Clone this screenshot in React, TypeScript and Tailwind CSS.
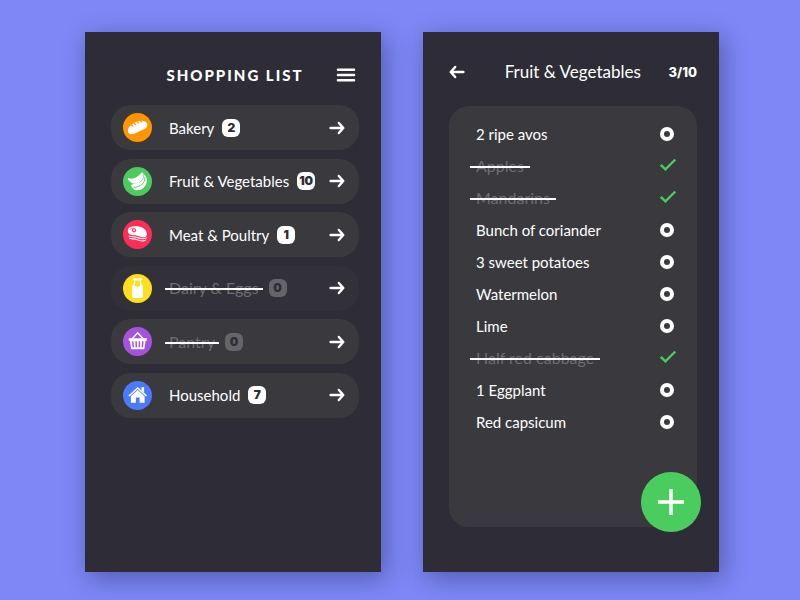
import { useState, type ReactNode } from "react";

type Category = {
  name: string;
  count: number;
  color: string;
  row?: string;
  icon: ReactNode;
};

const breadIcon = (
  <g transform="rotate(-25 14.5 14.5)">
    <path
      fill="#fff"
      d="M8 10.2c2-1 4.200-1.200 6.500-1.200s4.600.2 6.500 1.200c2.400 1.200 3.900 2.800 3.900 4.600 0 2.500-2.300 4-5.400 4h-10c-3.100 0-5.400-1.500-5.400-4 0-1.800 1.500-3.400 3.900-4.600z"
    />
    <path
      stroke="#ff9500"
      strokeWidth="1.1"
      strokeLinecap="round"
      d="M9.500 8.500l1.300 2.800M12.800 8l1.300 3M16.100 8l1.300 3M19.400 8.500l1.300 2.800"
    />
  </g>
);

const bananaIcon = (
  <g fill="#fff">
    <path d="M18.400 5.600l1.900.3c.5 3.200-.5 6.400-2.700 8.600-3.700 3.700-10.200 2.900-12.900-2.400l.7-1c2.500 1.200 5.600.8 8.200-1 2-1.300 3.800-2.500 4.800-4.500z" />
    <path d="M20.900 7.300c2.400 1.700 3.400 4.600 2.900 7.500-1 5.700-6.400 9.500-12.600 8.300l-.6-1.300c-1.400-.8-2.300-2-2.600-3.600 1-.9 1.700-1.100 2.700-1.300 3.500.1 6.300-1.100 8.300-3.300 1.500-1.700 2.100-3.800 1.900-6.300z" />
    <path fill="none" stroke="#4acd5e" strokeWidth=".9" d="M22 10c.2 5.500-4 10-11.500 10.500" />
  </g>
);

const meatIcon = (
  <g>
    <path
      fill="#fff"
      d="M6.400 7.600c3-2 9.200-1.700 12.400-.3 2.900 1.300 4.900 3.700 5.100 6.400.2 2.500-1.500 3.800-4 3.600-3-.2-4.700-1.700-7.500-2-2.500-.3-5.200-.1-6.700-1.900-1.300-1.700-1.200-4.300.7-5.800z"
    />
    <path
      fill="none"
      stroke="#fff"
      strokeWidth="1.100"
      strokeLinecap="round"
      d="M6 16.100c2.300 1 4.900.3 7.300 1.200 3.400 1.300 7 2.500 10 .6M6.600 18.300c2.300.9 4.500.3 6.800 1.200 3.200 1.300 6.500 2.400 9.200.6"
    />
    <circle cx="11" cy="10.300" r="1.600" fill="none" stroke="#ff2d55" strokeWidth="1.100" />
    <path fill="none" stroke="#ff2d55" strokeWidth=".6" d="M6.900 9.800c.3-1.200 2-1.800 4-1.700" />
  </g>
);

const bottleIcon = (
  <g>
    <path
      fill="#fff"
      d="M10.200 4.300h8.600v2h-.9v2.200c0 1.300 2 2.300 2 4.300v10c0 .7-.5 1.200-1.200 1.200h-8.400c-.7 0-1.200-.5-1.200-1.200v-10c0-2 2-3 2-4.300V6.300h-.9z"
    />
    <path fill="#fddf1e" d="M12.200 6.600h4.600v2.600c.2 1.100.9 1.800 1.400 2.600-1.500-.4-2.400.4-3.700 1-1.300-.4-2-1.300-3.600-1 .6-.8 1.200-1.500 1.300-2.600z" />
  </g>
);

const basketIcon = (
  <g>
    <path fill="none" stroke="#fff" strokeWidth="1.400" d="M8.800 12.300L14.700 5.900l5.900 6.400" />
    <path fill="#fff" d="M5.800 11.300h18v2.400h-1.200l-1.300 8.500H8.200l-1.300-8.500H5.800z" />
    <path stroke="#a552e0" strokeWidth="1.500" d="M9.700 14.200l.6 6M13.100 14.200l.2 6M16.500 14.200l-.2 6M19.900 14.200l-.6 6" />
  </g>
);

const houseIcon = (
  <g>
    <path fill="none" stroke="#fff" strokeWidth="1.500" d="M5.900 15L14.700 7l8.800 8" />
    <path fill="#fff" d="M14.700 9.100l6.900 6.200v6.500h-5v-5.200h-3.700v5.200H7.900v-6.500zM18.500 6.300h2.600v5.200l-2.600-2.300z" />
  </g>
);

const categories: Category[] = [
  { name: "Bakery", count: 2, color: "#ff9500", icon: breadIcon },
  { name: "Fruit & Vegetables", count: 10, color: "#4acd5e", icon: bananaIcon },
  { name: "Meat & Poultry", count: 1, color: "#ff2d55", icon: meatIcon },
  { name: "Dairy & Eggs", count: 0, color: "#fddf1e", row: "bg-[#32313a]", icon: bottleIcon },
  { name: "Pantry", count: 0, color: "#a552e0", icon: basketIcon },
  { name: "Household", count: 7, color: "#4b7bfa", icon: houseIcon },
];

const initialItems = [
  { name: "2 ripe avos", done: false },
  { name: "Apples", done: true },
  { name: "Mandarins", done: true },
  { name: "Bunch of coriander", done: false },
  { name: "3 sweet potatoes", done: false },
  { name: "Watermelon", done: false },
  { name: "Lime", done: false },
  { name: "Half red cabbage", done: true },
  { name: "1 Eggplant", done: false },
  { name: "Red capsicum", done: false },
];

function Arrow({ back = false }: { back?: boolean }) {
  return (
    <svg
      aria-hidden="true"
      className={back ? "h-4 w-4 rotate-180" : "h-4 w-4"}
      viewBox="0 0 16 16"
      fill="none"
      stroke="#fff"
      strokeWidth="2.400"
      strokeLinecap="round"
      strokeLinejoin="round"
    >
      <path d="M1.600 8h12.500M9.800 3l4.500 5-4.500 5" />
    </svg>
  );
}

function CategoryRow({ category }: { category: Category }) {
  const empty = category.count === 0;
  return (
    <li>
      <a
        href="#"
        className={`flex h-[45px] items-center rounded-[20px] pr-3.5 pl-3 ${category.row ?? "bg-[#3a393e]"}`}
      >
        <svg aria-hidden="true" className="mr-[17px] h-[29px] w-[29px] shrink-0" viewBox="0 0 29 29">
          <circle cx="14.500" cy="14.500" r="14.500" fill={category.color} />
          {category.icon}
        </svg>
        <span
          className={
            empty
              ? "relative mr-2.5 text-base leading-5 whitespace-nowrap text-[#6f6e72] after:absolute after:top-1/2 after:-right-1 after:-left-1 after:h-0.5 after:bg-white"
              : "mr-2 whitespace-nowrap"
          }
        >
          {category.name}
        </span>
        <span
          className={`flex h-[18px] w-[18px] shrink-0 items-center justify-center rounded-md font-['Inter',sans-serif] text-xs font-black text-[#2e2d37] ${empty ? "bg-[#656468]" : "bg-white"}`}
        >
          {category.count}
        </span>
        <span className="ml-auto">
          <Arrow />
        </span>
      </a>
    </li>
  );
}

export default function App() {
  const [items, setItems] = useState(initialItems);
  const toggle = (name: string) =>
    setItems(items.map((item) => (item.name === name ? { ...item, done: !item.done } : item)));

  return (
    <main className="grid min-h-screen grid-cols-2 gap-[42px] bg-[#7d88f6] pt-8 pr-[81px] pb-7 pl-[85px] font-['Lato',sans-serif] text-[15px] leading-5 text-white">
      <section className="bg-[#2e2d37] pr-[22px] pl-[26px] shadow-[4px_6px_24px_rgba(30,30,90,0.45)]">
        <header className="grid grid-cols-[1fr_auto_1fr] items-center pt-[33px] pb-5">
          <h1 className="col-start-2 font-black tracking-[2px] whitespace-nowrap">SHOPPING LIST</h1>
          <button type="button" aria-label="Menu" className="mr-[3px] justify-self-end">
            <svg aria-hidden="true" className="h-5 w-5" viewBox="0 0 20 20" stroke="#fff" strokeWidth="2.600" strokeLinecap="round">
              <path d="M2 4.700h16M2 10h16M2 15.300h16" />
            </svg>
          </button>
        </header>
        <ul className="flex h-[313px] flex-col justify-between">
          {categories.map((category) => (
            <CategoryRow key={category.name} category={category} />
          ))}
        </ul>
      </section>

      <section className="flex flex-col bg-[#2e2d37] pr-[22px] pb-[45px] pl-[26px] shadow-[4px_6px_24px_rgba(30,30,90,0.45)]">
        <header className="flex items-center justify-between pt-[30px] pb-6">
          <a href="#" aria-label="Back">
            <Arrow back />
          </a>
          <h2 className="ml-3 text-[17px] leading-5 whitespace-nowrap">Fruit &amp; Vegetables</h2>
          <span className="font-['Inter',sans-serif] text-[13px] font-extrabold">
            {items.filter((item) => item.done).length}/{items.length}
          </span>
        </header>
        <div className="relative grow rounded-[20px] bg-[#3a393e] pt-3 pr-[21px] pl-[27px]">
          <ul>
            {items.map((item) => (
              <li key={item.name}>
                <label className="flex h-8 cursor-pointer items-center justify-between">
                  <span
                    className={
                      item.done
                        ? "relative text-base leading-5 text-[#6f6e72] after:absolute after:top-1/2 after:-right-1.5 after:-left-1.5 after:h-0.5 after:bg-white"
                        : ""
                    }
                  >
                    {item.name}
                  </span>
                  <span className="grid h-4 w-4 place-items-center">
                    <input
                      type="checkbox"
                      checked={item.done}
                      onChange={() => toggle(item.name)}
                      className="peer col-start-1 row-start-1 mr-0.5 h-3.5 w-3.5 appearance-none rounded-full border-4 border-white checked:border-transparent"
                    />
                    <svg
                      aria-hidden="true"
                      className="pointer-events-none col-start-1 row-start-1 hidden h-4 w-4 peer-checked:block"
                      viewBox="0 0 16 16"
                      fill="none"
                      stroke="#4acd5e"
                      strokeWidth="2.400"
                    >
                      <path d="M.8 6.800l4.600 4.600L15.300 1.500" />
                    </svg>
                  </span>
                </label>
              </li>
            ))}
          </ul>
          <button
            type="button"
            aria-label="Add item"
            className="absolute -right-1 -bottom-[5px] flex h-[60px] w-[60px] items-center justify-center rounded-full bg-[#4acd5e]"
          >
            <svg aria-hidden="true" className="h-[26px] w-[26px]" viewBox="0 0 26 26" stroke="#fff" strokeWidth="3.400">
              <path d="M13 0v26M0 13h26" />
            </svg>
          </button>
        </div>
      </section>
    </main>
  );
}
